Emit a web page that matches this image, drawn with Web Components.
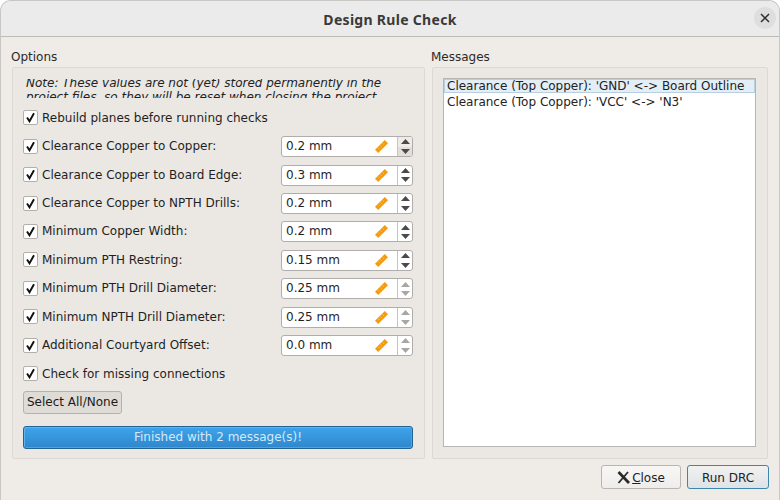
<!DOCTYPE html>
<html><head><meta charset="utf-8"><title>Design Rule Check</title>
<style>
html,body{margin:0;padding:0;background:#fff}
body{width:780px;height:500px;overflow:hidden;font:12px "DejaVu Sans",sans-serif;color:#1c1c1c}
</style></head><body>
<drc-dialog>
<drc-group slot="left" label="Options">
<div style="display:flex;flex-direction:column">
<drc-note>Note: These values are not (yet) stored permanently in the project files, so they will be reset when closing the project.</drc-note>
<drc-row label="Rebuild planes before running checks"></drc-row>
<drc-row label="Clearance Copper to Copper:" value="0.2 mm" hot></drc-row>
<drc-row label="Clearance Copper to Board Edge:" value="0.3 mm"></drc-row>
<drc-row label="Clearance Copper to NPTH Drills:" value="0.2 mm"></drc-row>
<drc-row label="Minimum Copper Width:" value="0.2 mm"></drc-row>
<drc-row label="Minimum PTH Restring:" value="0.15 mm"></drc-row>
<drc-row label="Minimum PTH Drill Diameter:" value="0.25 mm" disabled></drc-row>
<drc-row label="Minimum NPTH Drill Diameter:" value="0.25 mm" disabled></drc-row>
<drc-row label="Additional Courtyard Offset:" value="0.0 mm" disabled></drc-row>
<drc-row label="Check for missing connections"></drc-row>
<drc-btn kind="plain" style="margin-top:3px;align-self:flex-start;width:99px;height:23px">Select All/None</drc-btn>
<drc-progress style="margin-top:12px">Finished with 2 message(s)!</drc-progress>
</div>
</drc-group>
<drc-group slot="right" label="Messages">
<drc-list>
<drc-item selected>Clearance (Top Copper): 'GND' &lt;-&gt; Board Outline</drc-item>
<drc-item>Clearance (Top Copper): 'VCC' &lt;-&gt; 'N3'</drc-item>
</drc-list>
</drc-group>
<drc-btn slot="actions" kind="close" style="width:80px;height:24px"><u>C</u>lose</drc-btn>
<drc-btn slot="actions" kind="default" style="width:82px;height:24px">Run DRC</drc-btn>
</drc-dialog>
<script>
function def(name, html){
  customElements.define(name, class extends HTMLElement{
    connectedCallback(){
      if(this.shadowRoot) return;
      const r=this.attachShadow({mode:'open'});
      r.innerHTML=typeof html==='function'?html(this):html;
    }
  });
}
def('drc-dialog',`<style>
:host{display:flex;flex-direction:column;width:780px;height:500px;box-sizing:border-box;background:#efebe7;border:1px solid #c9c7c4;border-bottom:0;border-radius:11px 11px 0 0;overflow:hidden}
.bar{flex:none;height:36px;box-sizing:border-box;background:#ebebeb;border-bottom:1px solid #bdbbb8;display:flex;align-items:center;justify-content:center;position:relative;font:700 14px "Noto Sans",sans-serif;letter-spacing:.3px;color:#3a3a3a;padding-top:1px}
.x{position:absolute;right:3px;top:6px;width:22px;height:22px;border-radius:50%;background:#dedede;display:flex;align-items:center;justify-content:center}
.main{flex:1;display:flex;gap:7px;padding:10px 11px 0 11px;min-height:0}
.l{flex:none;width:413px;display:flex}.r{flex:none;width:336px;display:flex}
.foot{flex:none;height:41px;display:flex;justify-content:flex-end;gap:6px;padding:6px 10px 0 0;box-sizing:border-box}
</style>
<div class="bar"><span>Design Rule Check</span><div class="x"><svg width="10" height="10" viewBox="0 0 10 10"><path d="M1 1L9 9M9 1L1 9" stroke="#2e2e2e" stroke-width="1.5" fill="none"/></svg></div></div>
<div class="main"><div class="l"><slot name="left"></slot></div><div class="r"><slot name="right"></slot></div></div>
<div class="foot"><slot name="actions"></slot></div>`);
def('drc-group',el=>`<style>
:host{display:flex;flex-direction:column;flex:1;min-width:0}
.t{height:20px;line-height:20px;color:#2a2a2a;margin-left:-1px}
.b{flex:1;box-sizing:border-box;background:#ebe8e4;border:1px solid #dcd9d5;border-radius:2px;padding:0 11px 0 10px;min-height:0;display:flex;flex-direction:column}
</style><div class="t">${el.getAttribute('label')}</div><div class="b"><slot></slot></div>`);
def('drc-note',`<style>
:host{display:block;height:19px;margin:11px 0 5.5px 0;overflow:hidden;font-style:italic;font-size:12px}
div{margin-top:-3.5px;line-height:14px;padding-left:3px;width:362px;color:#222}
</style><div><slot></slot></div>`);
def('drc-row',el=>{
  const v=el.getAttribute('value'),d=el.hasAttribute('disabled');
  const c=d?'#a9a7a4':'#4a4a4a';
  return `<style>
:host{display:flex;align-items:center;height:28.44px;color:#1f1f1f}
.c{flex:none;width:13px;height:13px;background:#fff;border:1px solid #b3b0ac;border-radius:2px;margin-right:4px;display:flex;align-items:center;justify-content:center}
.lab{flex:1;white-space:nowrap}
.sp{flex:none;width:132px;height:21px;margin-top:1px;box-sizing:border-box;background:#fff;border:1px solid #b0adaa;border-radius:3px;display:flex;align-items:stretch}
.val{flex:1;padding-left:4px;line-height:19px;color:#1f1f1f}
.ic{flex:none;width:23px;display:flex;align-items:center;justify-content:flex-start}
.arr{flex:none;width:14px;border-left:1px solid #c6c3c0;border-radius:0 2px 2px 0;display:flex;flex-direction:column;overflow:hidden}
.arr>div{flex:1;display:flex;align-items:center;justify-content:center}
${el.hasAttribute('hot')?'.arr>div{background:#efebe7}.arr>div+div{background:#e2dfdb}':''}
</style>
<div class="c"><svg width="11" height="11" viewBox="0 0 11 11"><path d="M2 5.5L4.5 9.3L9 1.2" stroke="#111" stroke-width="1.9" fill="none"/></svg></div>
<div class="lab">${el.getAttribute('label')}</div>
${v?`<div class="sp"><div class="val">${v}</div><div class="ic"><svg width="15" height="15" viewBox="0 0 15 15"><path d="M10.8 1L14 4.2L4.2 14L1 10.8Z" fill="#f39c12"/><path d="M4 8.5l1.6 1.6M6.2 6.3l1.6 1.6M8.4 4.1l1.6 1.6" stroke="#ffc463" stroke-width=".8"/></svg></div><div class="arr"><div><svg width="9" height="5" viewBox="0 0 9 5"><path d="M4.5 0L9 5H0Z" fill="${c}"/></svg></div><div><svg width="9" height="5" viewBox="0 0 9 5"><path d="M0 0H9L4.5 5Z" fill="${c}"/></svg></div></div></div>`:''}`;
});
def('drc-btn',el=>{
  const k=el.getAttribute('kind');
  const st={plain:'background:#dfdbd7;border:1px solid #b5b2ae;color:#1a1a1a;padding-bottom:1px',close:'background:linear-gradient(#f8f7f6,#efedea);border:1px solid #b9b6b2;color:#222;padding-top:1px',default:'background:linear-gradient(#f1f1f0,#dfe3e6);border:1px solid #3f86ae;color:#222;padding-top:1px'}[k];
  const ic=k==='close'?`<svg width="13" height="13" viewBox="0 0 13 13" style="margin-right:2px"><path d="M1.5 1L12 12" stroke="#2a2a2a" stroke-width="2.8" fill="none"/><path d="M11 1L1.5 12" stroke="#2a2a2a" stroke-width="1.8" fill="none"/></svg>`:'';
  return `<style>:host{display:flex;flex:none}
div{flex:1;box-sizing:border-box;border-radius:3px;display:flex;align-items:center;justify-content:center;white-space:nowrap;${st}}
</style><div>${ic}<span><slot></slot></span></div>`;
});
def('drc-progress',`<style>
:host{display:flex;height:23px;box-sizing:border-box;border:1px solid #1f6494;border-radius:3px;background:linear-gradient(#3ea4ec,#2f87cc);box-shadow:inset 1px 1px 0 #5fb4ee,inset -1px -1px 0 #5b9fce;color:#d4e9f8;align-items:center;justify-content:center}
</style><slot></slot>`);
def('drc-list',`<style>
:host{display:block;flex:1;margin:10px 0 11px 0;background:#fff;border:1px solid #b8b5b2;min-height:0}
</style><slot></slot>`);
def('drc-item',el=>{
  const s=el.hasAttribute('selected');
  return `<style>
:host{display:block;height:${s?14:16}px;line-height:${s?15:18}px;padding-left:3px;white-space:nowrap;color:#222;${s?'background:#e3eef7;outline:1px solid #b7cfe0;outline-offset:-1px;':''}}
</style><slot></slot>`;
});
</script>
</body></html>
